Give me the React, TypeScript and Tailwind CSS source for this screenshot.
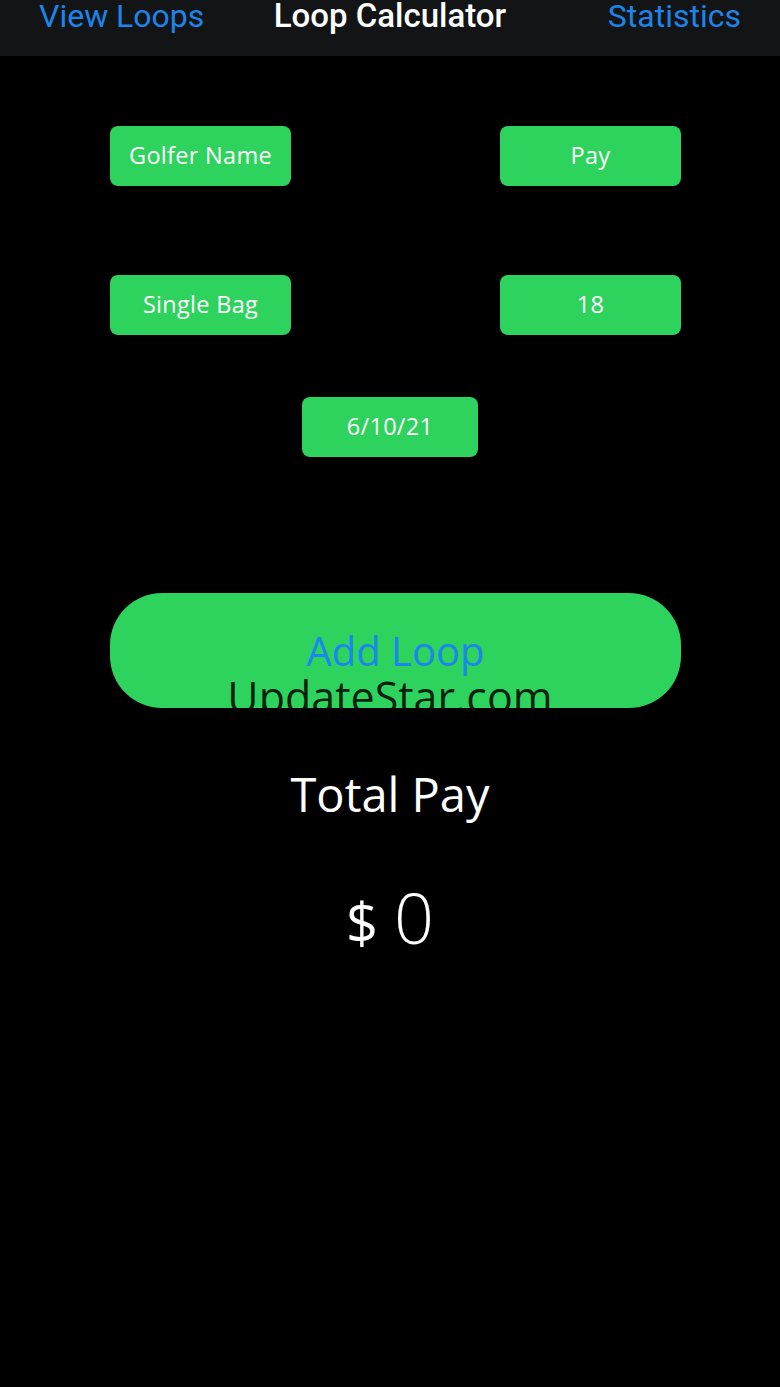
import { useState } from 'react';

const fieldButtons = ['Golfer Name', 'Pay', 'Single Bag', '18'];

const FieldButton = ({ label, className = '' }: { label: string; className?: string }) => (
  <button
    className={`h-[60px] rounded-[8px] bg-[#2dd35c] text-[23.5px] text-white tracking-[0.3px] ${className}`}
  >
    {label}
  </button>
);

const App = () => {
  const [total, setTotal] = useState(0);

  return (
    <div
      className="relative min-h-[1387px] w-[780px] bg-black text-white"
      style={{ fontFamily: '"Open Sans", "Liberation Sans", sans-serif' }}
    >
      {/* Nav bar */}
      <header
        className="grid h-[56px] grid-cols-[1fr_auto_1fr] items-start bg-[#121416] px-[39px]"
        style={{ fontFamily: 'Roboto, sans-serif' }}
      >
        <span className="mt-[-4px] text-[32px] leading-[40px] text-[#1d84ea]">View Loops</span>
        <span className="mt-[-4px] text-[33px] font-medium leading-[40px] text-white">Loop Calculator</span>
        <span className="mt-[-4px] justify-self-end text-[32px] leading-[40px] text-[#1d84ea]">Statistics</span>
      </header>

      <main className="pt-[70px]">
        <div className="grid grid-cols-[181px_181px] justify-between gap-y-[89px] pl-[110px] pr-[99px]">
          {fieldButtons.map((label) => (
            <FieldButton key={label} label={label} />
          ))}
        </div>

        <div className="mt-[62px] flex justify-center">
          <FieldButton label="6/10/21" className="w-[176px]" />
        </div>

        <div className="relative mt-[136px]">
          <button
            onClick={() => setTotal(total + 1)}
            className="ml-[110px] flex h-[115px] w-[571px] items-center justify-center rounded-[52px] bg-[#2dd35c] text-[40px] text-[#1a86f0]"
          >
            Add Loop
          </button>
          <span className="pointer-events-none absolute left-0 right-0 top-[76px] text-center text-[43px] leading-[56px] text-black/85">
            UpdateStar.com
          </span>
        </div>

        <div className="mt-[58px] text-center text-[47px] leading-[56px]">Total Pay</div>

        <div className="mt-[60px] flex items-baseline justify-center gap-[16px] leading-none">
          <span className="text-[56px]">$</span>
          <span className="text-[70px] font-light">{total}</span>
        </div>
      </main>
    </div>
  );
};

export default App;
